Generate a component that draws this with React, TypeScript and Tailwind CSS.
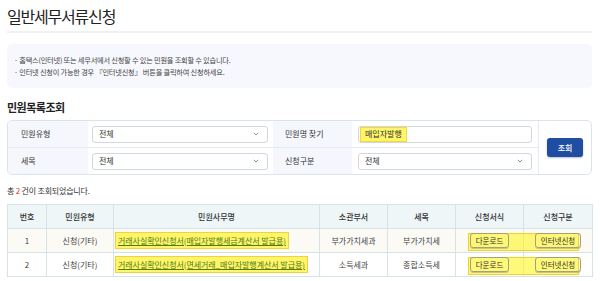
import React from "react";

function Chevron() {
  return (
    <svg width="6" height="4" viewBox="0 0 6 4" className="shrink-0">
      <polyline points="0.8,0.8 3,3 5.2,0.8" fill="none" stroke="#777" strokeWidth="0.8" />
    </svg>
  );
}

function Select({ value }: { value: string }) {
  return (
    <div className="h-[17px] w-full border border-[#d3d7de] rounded-[3px] bg-white flex items-center justify-between pl-[6px] pr-[8px] text-[8px] text-[#333]">
      <span>{value}</span>
      <Chevron />
    </div>
  );
}

function Btn({ children }: { children: React.ReactNode }) {
  return (
    <span className="relative z-[2] inline-flex items-center justify-center h-[15px] px-[5px] border border-[#a3a07a] rounded-[3px] bg-transparent text-[7.5px] text-[#333] shadow-[0_1px_0_#c9c38a]">
      {children}
    </span>
  );
}

export default function App() {
  const rows = [
    {
      no: "1",
      type: "신청(기타)",
      name: "거래사실확인신청서(매입자발행세금계산서 발급용)",
      dept: "부가가치세과",
      tax: "부가가치세",
      bg: "bg-[#fbfaf4]",
    },
    {
      no: "2",
      type: "신청(기타)",
      name: "거래사실확인신청서(면세거래_매입자발행계산서 발급용)",
      dept: "소득세과",
      tax: "종합소득세",
      bg: "bg-white",
    },
  ];
  const td = "border border-[#d5e3e7] text-center text-[8px] text-[#444]";
  return (
    <div className="w-[600px] h-[281px] bg-white pl-[7px] pr-[8px] font-['Noto_Sans_CJK_KR','Noto_Sans',sans-serif] text-[#333] overflow-hidden">
      <div className="h-[33px] flex items-center border-b-2 border-[#f0f1f4]">
        <h1 className="text-[16px] leading-[20px] tracking-[-1.2px] text-[#222] pt-[1px]">일반세무서류신청</h1>
      </div>
      <div className="mt-[11px] h-[44px] rounded-[5px] bg-[#f7f8fd] px-[7px] flex flex-col justify-center text-[7.2px] leading-[12px] text-[#444] tracking-[-0.2px]">
        <p>· 홈택스(인터넷) 또는 세무서에서 신청할 수 있는 민원을 조회할 수 있습니다.</p>
        <p>· 인터넷 신청이 가능한 경우 『인터넷신청』 버튼을 클릭하여 신청하세요.</p>
      </div>
      <h2 className="pt-[12px] mb-[6px] text-[11px] leading-[14px] font-bold tracking-[-0.5px] text-[#222]">민원목록조회</h2>
      <div className="h-[55px] border border-[#dbe3f0] rounded-[5px] grid grid-cols-[80px_185px_79px_186px_1fr] grid-rows-[27px_26px] overflow-hidden">
        <div className="bg-[#f5f7fc] border-b border-[#e6ebf3] flex items-center pl-[13px] text-[8px]">민원유형</div>
        <div className="border-b border-[#e6ebf3] flex items-center pl-[4px] pr-[5px]">
          <Select value="전체" />
        </div>
        <div className="bg-[#f5f7fc] border-b border-[#e6ebf3] flex items-center pl-[12px] text-[8px]">민원명 찾기</div>
        <div className="border-b border-[#e6ebf3] flex items-center pl-[6px] pr-[6px]">
          <div className="h-[17px] w-full border border-[#d3d7de] rounded-[3px] bg-white flex items-center pl-[1px]">
            <span className="h-[15px] px-[4px] bg-[#fff56b] border border-[#f0da3c] flex items-center text-[8px] text-[#333]">매입자발행</span>
          </div>
        </div>
        <div className="row-span-2 border-l border-[#e6ebf3] flex items-center justify-center">
          <span className="w-[36px] h-[19px] rounded-[3px] bg-[#1f4da2] text-white text-[8px] font-medium flex items-center justify-center shadow-[0_1px_2px_rgba(0,0,0,0.25)]">조회</span>
        </div>
        <div className="bg-[#f5f7fc] flex items-center pl-[13px] text-[8px]">세목</div>
        <div className="flex items-center pl-[4px] pr-[5px]">
          <Select value="전체" />
        </div>
        <div className="bg-[#f5f7fc] flex items-center pl-[12px] text-[8px]">신청구분</div>
        <div className="flex items-center pl-[6px] pr-[6px]">
          <Select value="전체" />
        </div>
      </div>
      <p className="h-[29px] flex items-center pt-[3px] text-[8px] text-[#333] tracking-[-0.2px]">
        총&nbsp;<span className="text-[#e5322d]">2</span>&nbsp;건이 조회되었습니다.
      </p>
      <table className="w-[585px] border-collapse table-fixed">
        <colgroup>
          <col className="w-[39px]" />
          <col className="w-[67px]" />
          <col className="w-[206px]" />
          <col className="w-[68px]" />
          <col className="w-[68px]" />
          <col className="w-[68px]" />
          <col className="w-[69px]" />
        </colgroup>
        <thead>
          <tr className="h-[24px] bg-[#eef6f8]">
            {["번호", "민원유형", "민원사무명", "소관부서", "세목", "신청서식", "신청구분"].map((h) => (
              <th key={h} className="border border-[#d5e3e7] text-center text-[8px] font-medium text-[#333]">
                {h}
              </th>
            ))}
          </tr>
        </thead>
        <tbody>
          {rows.map((r) => (
            <tr key={r.no} className={`h-[24px] ${r.bg}`}>
              <td className={td}>{r.no}</td>
              <td className={td}>{r.type}</td>
              <td className="border border-[#d5e3e7] text-left text-[8px] pl-[1px]">
                <span className="inline-flex items-center h-[17px] px-[2px] bg-[#fff56b] border border-[#f0d23a] text-[#4f7d12] underline underline-offset-[1px] tracking-[-0.05px] whitespace-nowrap">
                  {r.name}
                </span>
              </td>
              <td className={td}>{r.dept}</td>
              <td className={td}>{r.tax}</td>
              <td className={`${td} relative`}>
                <span className="absolute z-[1] left-[12px] top-[4px] w-[111px] h-[18px] bg-[rgba(255,245,40,0.62)] border border-[rgba(235,205,30,0.85)] pointer-events-none" />
                <Btn>다운로드</Btn>
              </td>
              <td className={td}>
                <Btn>인터넷신청</Btn>
              </td>
            </tr>
          ))}
        </tbody>
      </table>
    </div>
  );
}
